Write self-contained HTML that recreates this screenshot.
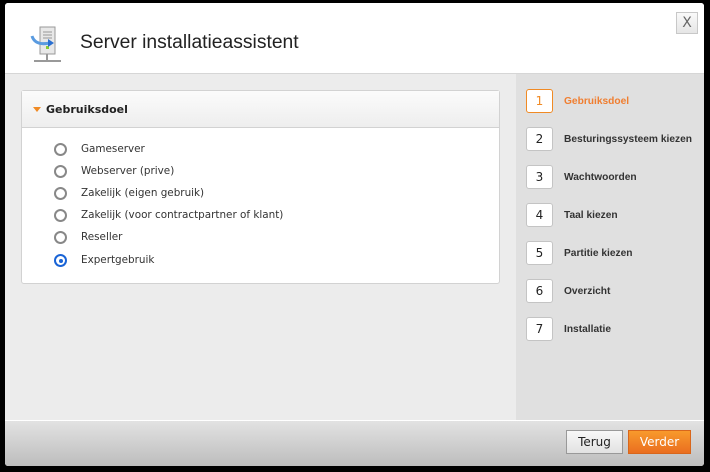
<!DOCTYPE html>
<html><head><style>
*{margin:0;padding:0;box-sizing:border-box}
body{width:710px;height:472px;background:#000;position:relative;overflow:hidden;font-family:"DejaVu Sans","Liberation Sans",sans-serif;}
.dlg{position:absolute;left:5px;top:3px;width:699px;height:463px;background:#fff;border-radius:3px;overflow:hidden}
.hdr{position:absolute;left:0;top:0;width:699px;height:71px;background:#fff;border-bottom:1px solid #d6d6d6}
.title{position:absolute;left:75px;top:29px;font-size:19.3px;color:#222;font-family:"Liberation Sans",sans-serif}
.x{position:absolute;left:671px;top:9px;width:22px;height:22px;border:1px solid #c8c8c8;background:linear-gradient(#fafafa,#e6e6e6);color:#666;font-size:14px;text-align:center;line-height:20px}
.main{position:absolute;left:0;top:71px;width:511px;height:346px;background:#ececec}
.side{position:absolute;left:511px;top:71px;width:188px;height:346px;background:#e0e0e0}
.ftr{position:absolute;left:0;top:417px;width:699px;height:46px;background:linear-gradient(#e2e2e2,#bdbdbd);border-top:1px solid #fff}
.panel{position:absolute;left:16px;top:87px;width:479px;height:194px;background:#fff;border:1px solid #d2d2d2;border-radius:3px}
.ph{height:37px;background:linear-gradient(#fbfbfb,#eeeeee);border-bottom:1px solid #d2d2d2;font-size:11px;font-weight:bold;color:#222;padding:12px 0 0 24px;position:relative}
.ph:before{content:"";position:absolute;left:11px;top:16px;border-left:4px solid transparent;border-right:4px solid transparent;border-top:5px solid #f08a24}
.r{position:absolute;left:49px;font-size:10.4px;color:#333}
.r i{position:absolute;left:0;top:-1px;width:13px;height:13px;border:2px solid #888;border-radius:50%}
.r span{position:absolute;left:27px;top:-1px;white-space:nowrap}
.r i.on{border-color:#1a64d6}
.r i.on:after{content:"";position:absolute;left:2.5px;top:2.5px;width:4px;height:4px;background:#1a64d6;border-radius:50%}
.s{position:absolute;left:521px;width:27px;height:24px;background:#fff;border:1px solid #c4c4c4;border-radius:3px;text-align:center;line-height:22px;font-size:12px;color:#222}
.st{position:absolute;left:559px;font-size:10.2px;font-weight:bold;color:#333;white-space:nowrap;font-family:"Liberation Sans",sans-serif}
.btn{position:absolute;top:427px;height:24px;font-size:12px;text-align:center;line-height:22px}
</style></head><body>
<div class="dlg">
<div class="hdr">
<svg style="position:absolute;left:20px;top:22px" width="40" height="40" viewBox="0 0 40 40">
<rect x="15" y="2" width="15" height="27" fill="#e8e8e8" stroke="#999"/>
<line x1="18" y1="7" x2="27" y2="7" stroke="#999"/><line x1="18" y1="10" x2="27" y2="10" stroke="#999"/><line x1="18" y1="13" x2="27" y2="13" stroke="#999"/>
<rect x="21" y="21" width="3" height="3" fill="#8c3"/>
<path d="M7 11 Q10 21 25 18" stroke="#5a9be0" stroke-width="3" fill="none"/>
<path d="M23 14 L29 18 L23 22Z" fill="#2a6fd0"/>
<line x1="22" y1="29" x2="22" y2="36" stroke="#999" stroke-width="2"/>
<line x1="9" y1="36" x2="36" y2="36" stroke="#999" stroke-width="2"/>
</svg>
<div class="title">Server installatieassistent</div>
<div class="x">X</div>
</div>
<div class="main"></div><div class="side"></div><div class="ftr"></div>
<div class="panel"><div class="ph">Gebruiksdoel</div></div>
<div class="r" style="top:141px"><i></i><span>Gameserver</span></div>
<div class="r" style="top:163px"><i></i><span>Webserver (prive)</span></div>
<div class="r" style="top:185px"><i></i><span>Zakelijk (eigen gebruik)</span></div>
<div class="r" style="top:207px"><i></i><span>Zakelijk (voor contractpartner of klant)</span></div>
<div class="r" style="top:229px"><i></i><span>Reseller</span></div>
<div class="r" style="top:252px"><i class="on"></i><span>Expertgebruik</span></div>

<div class="s" style="top:86px;border-color:#f08a24;color:#f08a24">1</div><div class="st" style="top:93px;color:#f07e30">Gebruiksdoel</div>
<div class="s" style="top:124px">2</div><div class="st" style="top:131px">Besturingssysteem kiezen</div>
<div class="s" style="top:162px">3</div><div class="st" style="top:169px">Wachtwoorden</div>
<div class="s" style="top:200px">4</div><div class="st" style="top:207px">Taal kiezen</div>
<div class="s" style="top:238px">5</div><div class="st" style="top:245px">Partitie kiezen</div>
<div class="s" style="top:276px">6</div><div class="st" style="top:283px">Overzicht</div>
<div class="s" style="top:314px">7</div><div class="st" style="top:321px">Installatie</div>

<div class="btn" style="left:561px;width:57px;border:1px solid #999;background:linear-gradient(#f8f8f8,#e2e2e2);color:#222">Terug</div>
<div class="btn" style="left:623px;width:63px;border:1px solid #d8661c;background:linear-gradient(#f89a2c,#ea6e20);color:#fff">Verder</div>
</div>
</body></html>
